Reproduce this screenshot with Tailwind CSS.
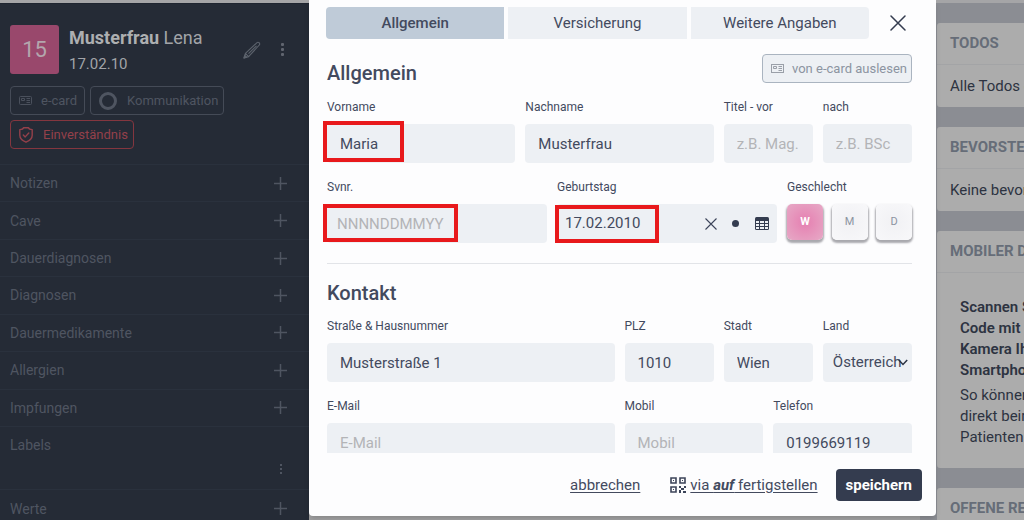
<!DOCTYPE html>
<html lang="de">
<head>
    <meta charset="UTF-8">
    <meta name="viewport" content="width=device-width, initial-scale=1.0">
    <title>Patient bearbeiten</title>
    <script src="https://cdn.jsdelivr.net/npm/@tailwindcss/browser@4"></script>
    <style>
        body {
            font-family: Roboto, 'Liberation Sans', sans-serif;
        }
    </style>
</head>
<body class="relative h-screen overflow-hidden bg-[#8b8d93] text-[#434a5e]">

    <!-- Abgedunkelte Seite hinter dem Dialog -->
    <div class="flex h-full flex-col overflow-hidden">
        <div class="h-[3px] shrink-0 bg-[#a5a5a7]"></div>
        <div class="flex min-h-0 flex-1">

            <aside class="w-[309px] shrink-0 overflow-hidden border-t border-[#1f2530] bg-[#252b36] text-[#4f5561]">
                <div class="flex items-center pt-[21px] pl-[10px]">
                    <div class="flex size-[49px] items-center justify-center rounded-[3px] bg-[#99486c] text-[22px] text-[#b3a6ad]">15</div>
                    <div class="ml-[10px] flex-1 text-[#a2a4a8]">
                        <h1 class="text-lg leading-6"><strong class="font-bold text-[#adafb1]">Musterfrau</strong> Lena</h1>
                        <p class="mt-1 text-[15px] leading-5">17.02.10</p>
                    </div>
                    <button class="mr-[18px]" aria-label="Bearbeiten">
                        <svg class="h-[18px] w-[18px]" viewBox="0 0 18 18" fill="none" stroke="#5d636d" stroke-width="1.100" stroke-linejoin="round"><path d="M1 17l1.400-4.600L14 1.700a1.400 1.400 0 0 1 2 0l.3.300a1.400 1.400 0 0 1 0 2L5.600 15.600zM2.400 12.400l3.200 3.200M5.500 12.600l8-7.800"/><path d="M1 17l.8-2.600 1.800 1.800z" fill="#5d636d"/></svg>
                    </button>
                    <button class="mr-[22px]" aria-label="Mehr">
                        <svg class="h-4 w-2" viewBox="0 0 8 16" fill="#60656f"><rect x="2" y="1" width="3" height="3" rx="1"/><rect x="2" y="6" width="3" height="3" rx="1"/><rect x="2" y="11" width="3" height="3" rx="1"/></svg>
                    </button>
                </div>

                <div class="mt-3 flex flex-wrap gap-[5px] pl-[10px] text-[13px]">
                    <button class="flex h-[29px] w-[75px] items-center rounded-[4px] border border-[#454b57] pl-2">
                        <svg class="mr-[9px] h-[9px] w-[13px]" viewBox="0 0 13 9" fill="none" stroke="#4a505c"><rect x=".5" y=".5" width="12" height="8" rx="1"/><path d="M2.500 2.500h3v2h-3zM7.500 2.500h3.500M7.500 4.500h3.500M7.500 6.500h3.500"/></svg>
                        e-card
                    </button>
                    <button class="flex h-[29px] w-[134px] items-center rounded-[4px] border border-[#454b57] pl-2">
                        <span class="mr-[10px] size-[18px] rounded-full border-[3px] border-[#4f5561]"></span>
                        Kommunikation
                    </button>
                    <button class="flex h-[29px] w-[124px] items-center rounded-[4px] border border-[#84363f] pl-2 text-[#94404a]">
                        <svg class="mr-[10px] h-4 w-[14px]" viewBox="0 0 14 16" fill="none" stroke="#94404a" stroke-width="1.400" stroke-linecap="round" stroke-linejoin="round"><path d="M4.500.8h5c.3 1 1.500 1.700 3.700 1.800v5.600c0 3.200-2.400 5.400-6.200 7-3.800-1.600-6.200-3.800-6.200-7V2.600C3 2.500 4.200 1.800 4.500.8z"/><path d="M4.300 8l1.900 1.900L9.800 6"/></svg>
                        Einverständnis
                    </button>
                </div>

                <ul class="mt-[15px] grid h-[262px] auto-rows-fr text-sm">
                    <li class="flex items-center justify-between border-t border-[#2a313d] pr-[22px] pl-[10px]">Notizen
                        <button aria-label="Notizen hinzufügen"><svg class="size-[13px]" viewBox="0 0 13 13" stroke="#4f5561" stroke-width="1.500"><path d="M6.500 0v13M0 6.500h13"/></svg></button></li>
                    <li class="flex items-center justify-between border-t border-[#2a313d] pr-[22px] pl-[10px]">Cave
                        <button aria-label="Cave hinzufügen"><svg class="size-[13px]" viewBox="0 0 13 13" stroke="#4f5561" stroke-width="1.500"><path d="M6.500 0v13M0 6.500h13"/></svg></button></li>
                    <li class="flex items-center justify-between border-t border-[#2a313d] pr-[22px] pl-[10px]">Dauerdiagnosen
                        <button aria-label="Dauerdiagnosen hinzufügen"><svg class="size-[13px]" viewBox="0 0 13 13" stroke="#4f5561" stroke-width="1.500"><path d="M6.500 0v13M0 6.500h13"/></svg></button></li>
                    <li class="flex items-center justify-between border-t border-[#2a313d] pr-[22px] pl-[10px]">Diagnosen
                        <button aria-label="Diagnosen hinzufügen"><svg class="size-[13px]" viewBox="0 0 13 13" stroke="#4f5561" stroke-width="1.500"><path d="M6.500 0v13M0 6.500h13"/></svg></button></li>
                    <li class="flex items-center justify-between border-t border-[#2a313d] pr-[22px] pl-[10px]">Dauermedikamente
                        <button aria-label="Dauermedikamente hinzufügen"><svg class="size-[13px]" viewBox="0 0 13 13" stroke="#4f5561" stroke-width="1.500"><path d="M6.500 0v13M0 6.500h13"/></svg></button></li>
                    <li class="flex items-center justify-between border-t border-[#2a313d] pr-[22px] pl-[10px]">Allergien
                        <button aria-label="Allergien hinzufügen"><svg class="size-[13px]" viewBox="0 0 13 13" stroke="#4f5561" stroke-width="1.500"><path d="M6.500 0v13M0 6.500h13"/></svg></button></li>
                    <li class="flex items-center justify-between border-t border-[#2a313d] pr-[22px] pl-[10px]">Impfungen
                        <button aria-label="Impfungen hinzufügen"><svg class="size-[13px]" viewBox="0 0 13 13" stroke="#4f5561" stroke-width="1.500"><path d="M6.500 0v13M0 6.500h13"/></svg></button></li>
                </ul>
                <div class="flex h-[63px] flex-col border-t border-[#2a313d] pt-2 pr-[22px] pl-[10px] text-sm">Labels
                    <button class="mt-2 mr-[2px] self-end" aria-label="Labels bearbeiten">
                        <svg class="h-3 w-2" viewBox="0 0 8 12" fill="#4f5561"><rect x="3" y="1" width="2" height="2"/><rect x="3" y="5" width="2" height="2"/><rect x="3" y="9" width="2" height="2"/></svg>
                    </button>
                </div>
                <div class="flex h-[38px] items-center justify-between border-t border-[#2a313d] pr-[22px] pl-[10px] text-sm">Werte
                    <button aria-label="Werte hinzufügen"><svg class="size-[13px]" viewBox="0 0 13 13" stroke="#4f5561" stroke-width="1.500"><path d="M6.500 0v13M0 6.500h13"/></svg></button>
                </div>
            </aside>

            <main class="mr-[17px] min-w-[611px] flex-1 bg-[#a0a0a1]"></main>

            <div class="flex w-[250px] shrink-0 flex-col gap-5 pt-5 text-[15px] whitespace-nowrap text-[#2d3341]">
                <section class="rounded-[3px] bg-[#acacac]">
                    <h2 class="flex h-[42px] items-center border-b border-[#a3a4a6] pl-[13px] font-bold text-[#666d78]">TODOS</h2>
                    <p class="flex h-[42px] items-center pl-[13px]">Alle Todos erledigt</p>
                </section>
                <section class="rounded-[3px] bg-[#acacac]">
                    <h2 class="flex h-[42px] items-center border-b border-[#a3a4a6] pl-[13px] font-bold text-[#666d78]">BEVORSTEHENDE TERMINE</h2>
                    <p class="flex h-[42px] items-center pl-[13px]">Keine bevorstehenden Termine</p>
                </section>
                <section class="rounded-[3px] bg-[#acacac]">
                    <h2 class="flex h-[42px] items-center border-b border-[#a3a4a6] pl-[13px] font-bold text-[#666d78]">MOBILER DATEIUPLOAD</h2>
                    <div class="px-[23px] pt-6 pb-5 leading-[21px]">
                        <p class="font-semibold">Scannen Sie den QR-<br>Code mit der<br>Kamera Ihres<br>Smartphones.</p>
                        <p class="mt-1">So können Sie Dateien<br>direkt beim<br>Patienten speichern.</p>
                    </div>
                </section>
                <section class="rounded-[3px] bg-[#acacac]">
                    <h2 class="flex h-[42px] items-center border-b border-[#a3a4a6] pl-[13px] font-bold text-[#666d78]">OFFENE RECHNUNGEN</h2>
                </section>
            </div>
        </div>
    </div>

    <!-- Dialog -->
    <div class="absolute inset-0 flex pr-[88px] pb-1 pl-[309px]">
        <form class="flex min-w-0 flex-1 flex-col rounded-b-[4px] bg-[#fdfdfe] shadow-md" role="dialog" aria-label="Patient bearbeiten">
            <div class="flex items-center pt-[7px] pr-[30px] pl-[17px]">
                <div class="grid flex-1 grid-cols-3 gap-1 text-[15px]" role="tablist">
                    <button type="button" role="tab" aria-selected="true" class="h-8 rounded-l-[4px] bg-[#bfcbd8] font-medium">Allgemein</button>
                    <button type="button" role="tab" class="h-8 bg-[#edf0f4]">Versicherung</button>
                    <button type="button" role="tab" class="h-8 rounded-r-[4px] bg-[#edf0f4]">Weitere Angaben</button>
                </div>
                <button type="button" class="ml-[21px]" aria-label="Schließen">
                    <svg class="size-4" viewBox="0 0 16 16" stroke="#343c4f" stroke-width="1.500" stroke-linecap="round"><path d="M1 1l14 14M15 1L1 15"/></svg>
                </button>
            </div>

            <div class="min-h-0 flex-1 overflow-hidden pr-6 pl-[14px]">
                <div class="pl-1">
                    <div class="flex h-[60px] items-center justify-between pt-[7px]">
                        <h2 class="text-xl font-medium">Allgemein</h2>
                        <button type="button" class="-mt-2 flex h-[29px] w-[150px] items-center rounded-[4px] border border-[#aab4c0] bg-[#edf0f4] pl-2 text-[13px] text-[#8c94a1]">
                            <svg class="mr-2 h-[9px] w-[13px]" viewBox="0 0 13 9" fill="none" stroke="#9a9fa8"><rect x=".5" y=".5" width="12" height="8"/><path d="M2.500 2.500h3v2h-3zM7.500 2.500h3.500M7.500 4.500h3.500M7.500 6.500h3.500"/></svg>
                            von e-card auslesen
                        </button>
                    </div>

                    <div class="grid grid-cols-6 gap-[10px]">
                        <div class="relative col-span-2">
                            <label for="vorname" class="mb-2 block text-xs leading-[17px]">Vorname</label>
                            <input id="vorname" type="text" value="Maria" class="block h-[39px] w-full rounded-[4px] bg-[#edf0f4] px-[13px] text-[15px]">
                            <span class="pointer-events-none absolute bottom-px -left-1 h-[41px] w-[81px] border-4 border-[#e8191c]"></span>
                        </div>
                        <div class="col-span-2">
                            <label for="nachname" class="mb-2 block text-xs leading-[17px]">Nachname</label>
                            <input id="nachname" type="text" value="Musterfrau" class="block h-[39px] w-full rounded-[4px] bg-[#edf0f4] px-[13px] text-[15px]">
                        </div>
                        <div>
                            <label for="titel-vor" class="mb-2 block text-xs leading-[17px]">Titel - vor</label>
                            <input id="titel-vor" type="text" placeholder="z.B. Mag." class="block h-[39px] w-full rounded-[4px] bg-[#edf0f4] px-[13px] text-[15px] placeholder:text-[#b3b4b7]">
                        </div>
                        <div>
                            <label for="titel-nach" class="mb-2 block text-xs leading-[17px]">nach</label>
                            <input id="titel-nach" type="text" placeholder="z.B. BSc" class="block h-[39px] w-full rounded-[4px] bg-[#edf0f4] px-[13px] text-[15px] placeholder:text-[#b3b4b7]">
                        </div>
                    </div>

                    <div class="mt-4 flex gap-[10px]">
                        <div class="relative flex-1">
                            <label for="svnr" class="mb-2 block text-xs leading-[17px]">Svnr.</label>
                            <input id="svnr" type="text" placeholder="NNNNDDMMYY" class="block h-[39px] w-full rounded-[4px] bg-[#edf0f4] px-[10px] text-[15px] placeholder:text-[#b3b4b7]">
                            <span class="pointer-events-none absolute bottom-px -left-1 h-[38px] w-[135px] border-4 border-[#e8191c]"></span>
                        </div>
                        <div class="relative flex-1">
                            <label for="geburtstag" class="mb-2 block text-xs leading-[17px]">Geburtstag</label>
                            <div class="flex h-[39px] items-center rounded-[4px] bg-[#edf0f4] px-2">
                                <input id="geburtstag" type="text" value="17.02.2010" class="w-0 flex-1 text-[15px]">
                                <button type="button" aria-label="Datum löschen"><svg class="size-3" viewBox="0 0 12 12" stroke="#3c4459" stroke-width="1.100"><path d="M.5.5l11 11M11.500.5l-11 11"/></svg></button>
                                <button type="button" class="ml-[15px] size-[7px] rounded-full bg-[#343c4f]" aria-label="Heute"></button>
                                <button type="button" class="ml-4" aria-label="Kalender"><svg class="h-[13px] w-[14px]" viewBox="0 0 14 13"><rect width="14" height="13" rx="1.500" fill="#343c4f"/><path d="M1 4h3v2H1zM5 4h4v2H5zM10 4h3v2h-3zM1 7h3v2H1zM5 7h4v2H5zM10 7h3v2h-3zM1 10h3v2H1zM5 10h4v2H5zM10 10h3v2h-3z" fill="#edf0f4"/></svg></button>
                            </div>
                            <span class="pointer-events-none absolute bottom-0 -left-0.5 h-[38px] w-[104px] border-4 border-[#e8191c]"></span>
                        </div>
                        <fieldset class="w-[125px]">
                            <legend class="mb-2 block text-xs leading-[17px]">Geschlecht</legend>
                            <div class="flex justify-between text-[11px] text-[#8c94a1]">
                                <label class="flex h-9 w-9 items-center justify-center rounded-[5px] bg-radial from-[#e57fb1] to-[#e6a9c6] font-bold text-white shadow-[0_2px_2px_1px_#a9a9ae]"><input type="radio" name="geschlecht" class="sr-only" checked>W</label>
                                <label class="flex h-9 w-9 items-center justify-center rounded-[5px] bg-radial from-[#f1f1f4] to-[#f8f8fa] shadow-[0_2px_2px_1px_#a9a9ae]"><input type="radio" name="geschlecht" class="sr-only">M</label>
                                <label class="flex h-9 w-9 items-center justify-center rounded-[5px] bg-radial from-[#f1f1f4] to-[#f8f8fa] shadow-[0_2px_2px_1px_#a9a9ae]"><input type="radio" name="geschlecht" class="sr-only">D</label>
                            </div>
                        </fieldset>
                    </div>

                    <hr class="mt-5 border-[#e2e4e8]">

                    <h2 class="mt-[15px] mb-[11px] text-xl leading-7 font-medium">Kontakt</h2>

                    <div class="grid grid-cols-6 gap-x-[10px] gap-y-4">
                        <div class="col-span-3">
                            <label for="strasse" class="mb-2 block text-xs leading-[17px]">Straße &amp; Hausnummer</label>
                            <input id="strasse" type="text" value="Musterstraße 1" class="block h-[39px] w-full rounded-[4px] bg-[#edf0f4] px-[13px] text-[15px]">
                        </div>
                        <div>
                            <label for="plz" class="mb-2 block text-xs leading-[17px]">PLZ</label>
                            <input id="plz" type="text" value="1010" class="block h-[39px] w-full rounded-[4px] bg-[#edf0f4] px-[13px] text-[15px]">
                        </div>
                        <div>
                            <label for="stadt" class="mb-2 block text-xs leading-[17px]">Stadt</label>
                            <input id="stadt" type="text" value="Wien" class="block h-[39px] w-full rounded-[4px] bg-[#edf0f4] px-[13px] text-[15px]">
                        </div>
                        <div class="relative">
                            <label for="land" class="mb-2 block text-xs leading-[17px]">Land</label>
                            <select id="land" class="block h-[39px] w-full appearance-none rounded-[4px] bg-[#edf0f4] pl-[10px] text-[15px]">
                                <option>Österreich</option>
                            </select>
                            <svg class="pointer-events-none absolute right-1 bottom-4 h-[7px] w-[10px]" viewBox="0 0 10 7" fill="none" stroke="#2b3242" stroke-width="1.500"><path d="M.8 1L5 5.500 9.200 1"/></svg>
                        </div>
                        <div class="col-span-3">
                            <label for="email" class="mb-2 block text-xs leading-[17px]">E-Mail</label>
                            <input id="email" type="email" placeholder="E-Mail" class="block h-[39px] w-full rounded-[4px] bg-[#edf0f4] px-[13px] text-[15px] placeholder:text-[#b3b4b7]">
                        </div>
                        <div class="col-span-3 grid grid-cols-2 gap-[10px]">
                            <div>
                                <label for="mobil" class="mb-2 block text-xs leading-[17px]">Mobil</label>
                                <input id="mobil" type="tel" placeholder="Mobil" class="block h-[39px] w-full rounded-[4px] bg-[#edf0f4] px-[13px] text-[15px] placeholder:text-[#b3b4b7]">
                            </div>
                            <div>
                                <label for="telefon" class="mb-2 block text-xs leading-[17px]">Telefon</label>
                                <input id="telefon" type="tel" value="0199669119" class="block h-[39px] w-full rounded-[4px] bg-[#edf0f4] px-[13px] text-[15px]">
                            </div>
                        </div>
                    </div>
                </div>
            </div>

            <div class="flex shrink-0 items-center justify-end pt-4 pr-[14px] pb-[15px] text-[15px]">
                <a href="#" class="underline underline-offset-2">abbrechen</a>
                <a href="#" class="ml-[30px] flex items-center">
                    <svg class="mr-1 size-4" viewBox="0 0 16 16" fill="none" stroke="#3c4459"><path d="M1 1h5v5H1zM10 1h5v5h-5zM1 10h5v5H1z" stroke-width="1.600"/><path d="M3 3h1v1H3zM12 3h1v1h-1zM3 12h1v1H3zM9 9h2v2H9zM11 11h3v2h-3zM14 9h2v2h-2zM9 13h2v3H9zM13 14h3v2h-3z" fill="#3c4459" stroke="none"/></svg>
                    <span class="underline underline-offset-2">via <em class="font-bold">auf</em> fertigstellen</span>
                </a>
                <button type="submit" class="ml-[18px] h-8 rounded-[4px] bg-[#343c4f] px-[10px] font-bold text-white">speichern</button>
            </div>
        </form>
    </div>
</body>
</html>
